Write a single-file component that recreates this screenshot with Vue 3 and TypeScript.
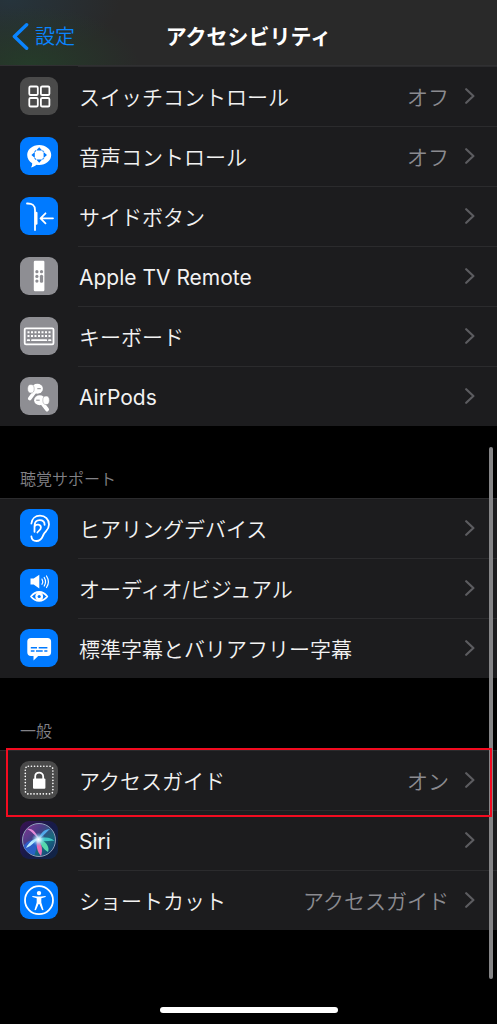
<script setup lang="ts">
type IconName =
  | 'switch' | 'voice' | 'side' | 'remote' | 'keyboard' | 'airpods'
  | 'ear' | 'av' | 'caption' | 'lock' | 'siri' | 'person'

interface Row {
  icon: IconName
  label: string
  tone: 'dark' | 'blue' | 'gray' | 'siri'
  value?: string
  marked?: boolean
  latin?: boolean
}

interface Section {
  id: string
  title?: string
  rows: Row[]
}

const sections: Section[] = [
  {
    id: 'input',
    rows: [
      { icon: 'switch', label: 'スイッチコントロール', tone: 'dark', value: 'オフ' },
      { icon: 'voice', label: '音声コントロール', tone: 'blue', value: 'オフ' },
      { icon: 'side', label: 'サイドボタン', tone: 'blue' },
      { icon: 'remote', label: 'Apple TV Remote', tone: 'gray', latin: true },
      { icon: 'keyboard', label: 'キーボード', tone: 'gray' },
      { icon: 'airpods', label: 'AirPods', tone: 'gray', latin: true },
    ],
  },
  {
    id: 'hearing',
    title: '聴覚サポート',
    rows: [
      { icon: 'ear', label: 'ヒアリングデバイス', tone: 'blue' },
      { icon: 'av', label: 'オーディオ/ビジュアル', tone: 'blue' },
      { icon: 'caption', label: '標準字幕とバリアフリー字幕', tone: 'blue' },
    ],
  },
  {
    id: 'general',
    title: '一般',
    rows: [
      { icon: 'lock', label: 'アクセスガイド', tone: 'dark', value: 'オン', marked: true },
      { icon: 'siri', label: 'Siri', tone: 'siri', latin: true },
      { icon: 'person', label: 'ショートカット', tone: 'blue', value: 'アクセスガイド' },
    ],
  },
]
</script>

<template>
  <div class="screen">
    <header class="nav">
      <a class="back" href="#settings">
        <svg class="back-arrow" viewBox="0 0 18 30" aria-hidden="true">
          <path d="M15.500 2.500 2.500 15l13 12.500" />
        </svg>
        <span>設定</span>
      </a>
      <h1>アクセシビリティ</h1>
    </header>

    <main>
      <section v-for="s in sections" :key="s.id">
        <h2 v-if="s.title">{{ s.title }}</h2>
        <ul class="group" :class="{ titled: s.title }">
          <li v-for="r in s.rows" :key="r.label" :class="{ marked: r.marked }">
            <button type="button" class="row">
              <span class="tile" :class="r.tone">
                <svg viewBox="0 0 38 38" aria-hidden="true">
                  <g v-if="r.icon === 'switch'" class="line">
                    <rect x="9.3" y="9.500" width="8.500" height="8.500" rx="1.3" />
                    <rect x="20.900" y="9.500" width="8.500" height="8.500" rx="1.3" />
                    <rect x="9.3" y="21" width="8.500" height="8.500" rx="1.3" />
                    <rect x="20.900" y="21" width="8.500" height="8.500" rx="1.3" />
                  </g>
                  <g v-else-if="r.icon === 'voice'">
                    <path class="fill" d="M19.2 8C12.500 8 7.200 12.400 7.200 18c0 3.400 1.900 6.400 5 8.200.1 1.500-.3 2.900-1.200 4.300 2.500-.5 4.300-1.500 5.700-2.700.8.1 1.600.2 2.500.2 6.700 0 12-4.400 12-10S25.900 8 19.200 8Z" />
                    <path class="cut" d="m19.200 10.200 3 3.400h-6zM19.200 25.800l3-3.400h-6zM11.400 18l3.400-3v6zM27 18l-3.400-3v6z" />
                    <path class="cut" d="m14 14.800 2-2-.2 1.900zM24.400 14.800l-2-2 .2 1.900zM14 21.200l2 2-.2-1.900zM24.400 21.200l-2 2 .2-1.900z" />
                  </g>
                  <g v-else-if="r.icon === 'side'" class="line">
                    <path d="M7 6.500c5.200-.2 8 1.700 8 6.500v20" />
                    <path d="M16.300 16v10.500" stroke-width="2.400" />
                    <path d="M33 21.300H20.700M25.500 16.300l-5 5 5 5" />
                  </g>
                  <g v-else-if="r.icon === 'remote'">
                    <rect class="fill" x="13.800" y="3.700" width="10.600" height="30.600" rx="1.200" />
                    <g class="cut">
                      <circle cx="16.900" cy="14.700" r="1.600" />
                      <circle cx="21.500" cy="14.700" r="1.600" />
                      <circle cx="16.900" cy="19.400" r="1.600" />
                      <circle cx="16.900" cy="24.100" r="1.600" />
                      <rect x="19.900" y="17.800" width="3.200" height="7.900" rx="1.500" />
                    </g>
                  </g>
                  <g v-else-if="r.icon === 'keyboard'">
                    <rect class="line" x="4.700" y="11.300" width="28.800" height="16" rx="1.300" />
                    <path class="keys" d="M7.500 15.300h23M7.500 19h23" />
                    <path class="line" d="M7.700 23.200h1.500M12 23.200h14.300M29 23.200h1.500" />
                  </g>
                  <g v-else-if="r.icon === 'airpods'">
                    <path class="stem" d="m14.500 15-4.700 6.500M22.500 26.500l4.600 6" />
                    <ellipse class="fill" cx="17.300" cy="11.700" rx="5.600" ry="5" />
                    <ellipse class="fill" cx="19.700" cy="23.200" rx="5.600" ry="5" />
                    <ellipse class="fill rim" cx="10.900" cy="11.800" rx="3.300" ry="4.300" />
                    <ellipse class="fill rim" cx="26.100" cy="23.300" rx="3.300" ry="4.300" />
                    <path class="slot" d="M17.300 11.700h3.500M16.200 23.200h3.500" />
                  </g>
                  <g v-else-if="r.icon === 'ear'" class="line">
                    <path d="M11.400 14.500C11.800 9.700 15.300 6.700 20 6.700c5.200 0 9 3.700 9 8.900 0 5.400-3.500 6.600-5.300 9.600-1.500 2.500-1.800 6.800-7.200 6.800-3 0-4.900-1.800-5.100-4.500" />
                    <path d="M14.500 22.800v-5.500c0-4 2-6.100 5.200-6.100 3 0 4.900 1.900 4.900 4.600M14.700 17.200c1.500-2.500 6.200-2.200 6.200 1.300 0 2.800-2.600 2.900-3.500 5" />
                  </g>
                  <g v-else-if="r.icon === 'av'">
                    <path class="fill" d="M10.500 9.600h3.200l5.600-3.900v13.800l-5.600-3.900h-3.200z" />
                    <path class="line thin" d="M22 10.100c.9 1.500.9 3.700 0 5.200M24.200 8.500c1.600 2.600 1.600 5.900 0 8.500M26.500 7c2.300 3.500 2.300 8 0 11.500" />
                    <path class="line" d="M11 27.500c4.600-6 11.700-6 16.300 0-4.600 5.800-11.700 5.800-16.300 0Z" />
                    <circle class="fill" cx="19.200" cy="27.500" r="3.900" />
                    <circle class="cut" cx="19.200" cy="27.500" r="1.600" />
                  </g>
                  <g v-else-if="r.icon === 'caption'">
                    <path class="fill" d="M11 8.900h16.400q3.700 0 3.700 3.600v10.800q0 3.600-3.700 3.600h-9.200l-4.700 4.700v-4.700H11q-3.700 0-3.700-3.600V12.500q0-3.600 3.700-3.600Z" />
                    <path class="words" d="M10.800 18.700H17M18.700 18.700h8.700M10.800 22h3.700M16 22h6.700M24.300 22h3.100" />
                  </g>
                  <g v-else-if="r.icon === 'lock'">
                    <rect class="dots" x="5.300" y="5.300" width="27.600" height="27.600" rx="3" />
                    <rect class="fill" x="13" y="17.600" width="12.400" height="10.200" rx="1" />
                    <path class="line" d="M15.200 18v-2.500c0-5.200 8-5.200 8 0V18" />
                  </g>
                  <g v-else-if="r.icon === 'siri'">
                    <defs>
                      <linearGradient id="orb" x1="0" y1="0" x2="1" y2="1">
                        <stop offset="0" stop-color="#8d3596" />
                        <stop offset=".35" stop-color="#4a3c86" />
                        <stop offset=".65" stop-color="#186a7d" />
                        <stop offset="1" stop-color="#152d75" />
                      </linearGradient>
                      <radialGradient id="core">
                        <stop offset="0" stop-color="#fff" />
                        <stop offset=".35" stop-color="#cdeeff" stop-opacity=".85" />
                        <stop offset="1" stop-color="#58b9eb" stop-opacity="0" />
                      </radialGradient>
                    </defs>
                    <circle cx="19" cy="19" r="16.500" fill="url(#orb)" stroke="#8ea0b9" stroke-width="1" />
                    <path d="M19 19C12 17 6 21 3.500 25c2.500 6 6 8 11 9Z" fill="#2a62d8" opacity=".8" />
                    <path d="M19 18C15 9 11 7 7 8c5 2 8 7 12 10Z" fill="#e58bd8" />
                    <path d="M19 18c1-6 6-10 11-10-4 3-6 7-11 10Z" fill="#51a9e9" />
                    <path d="M19 18c7-3 12-1 15.500 2-6-1-11 2-15.500-2Z" fill="#3dc7c3" />
                    <path d="M18 17c8 3 12 9 10 14-5-3-8-8-10-14Z" fill="#56d8ab" />
                    <path d="M17 18c5 4 6 11 4 17-4-4-5-11-4-17Z" fill="#e96cb6" />
                    <path d="M20 17c-4 2-8 8-14 10 3-6 8-10 14-10Z" fill="#b9eaff" />
                    <circle cx="18.500" cy="18.500" r="7" fill="url(#core)" />
                  </g>
                  <g v-else>
                    <circle class="line" cx="19" cy="19.200" r="14" />
                    <circle class="fill" cx="19" cy="12.100" r="2.200" />
                    <path class="fill" d="M12.700 14.900 17 15.600h4l4.300-.7q1 .2.300 1.200l-4.300 1.100v4.300l2.200 7.200q-.6 1.100-1.600.1L19.400 23h-.8l-2.500 5.800q-1 1-1.600-.1l2.200-7.200v-4.300l-4.300-1.100q-.7-1 .3-1.200Z" />
                  </g>
                </svg>
              </span>
              <span class="text">
                <span class="label" :class="{ latin: r.latin }">{{ r.label }}</span>
                <span v-if="r.value" class="value">{{ r.value }}</span>
                <svg class="chevron" viewBox="0 0 10 16" aria-hidden="true">
                  <path d="m1.200 1.200 7.200 6.800-7.200 6.800" />
                </svg>
              </span>
            </button>
          </li>
        </ul>
      </section>
    </main>

    <div class="scrollbar"></div>
    <div class="home"></div>
  </div>
</template>

<style>
body {
  margin: 0;
  background: #000;
}
</style>

<style scoped>
.screen {
  position: relative;
  min-height: 100vh;
  overflow: hidden;
  background: #000;
  color: #f2f2f2;
  font-family: Inter, "Noto Sans CJK JP", sans-serif;
  font-size: 21px;
  line-height: 30px;
}

.nav {
  display: grid;
  grid-template-columns: 1fr auto 1fr;
  align-items: center;
  box-sizing: border-box;
  height: 66px;
  padding: 8px 12px 0;
  border-bottom: 1px solid #303032;
  background:
    radial-gradient(ellipse 110px 60px at 30px 66px, #253c2a, transparent),
    radial-gradient(ellipse 110px 60px at 10px 0, #26343c, transparent),
    #292929;
}

.back {
  display: flex;
  align-items: center;
  gap: 6px;
  color: #0a84ff;
  font-size: 20px;
  font-weight: 350;
  text-decoration: none;
}

.back-arrow {
  width: 17px;
  height: 29px;
  fill: none;
  stroke: currentColor;
  stroke-width: 3.600;
  stroke-linecap: round;
  stroke-linejoin: round;
}

h1 {
  margin: 0;
  color: #fff;
  font-size: 21px;
  font-weight: 700;
}

h2 {
  box-sizing: border-box;
  height: 72px;
  margin: 0;
  padding: 38px 20px 0;
  color: #828287;
  font-size: 16px;
  font-weight: 350;
}

.group {
  margin: 0;
  padding: 0;
  list-style: none;
  background: #1c1c1e;
}

.titled {
  background: linear-gradient(#2b2b2d 1px, #1c1c1e 1px);
}

li {
  position: relative;
}

.row {
  display: flex;
  align-items: center;
  gap: 20px;
  width: 100%;
  height: 60px;
  padding: 0 0 0 20px;
  border: 0;
  background: none;
  color: inherit;
  font: inherit;
  font-weight: 350;
  text-align: left;
}

.text {
  display: flex;
  flex: 1;
  align-items: center;
  box-sizing: border-box;
  height: 60px;
  padding: 2px 22px 0 1px;
  border-top: 1px solid #2b2b2d;
}

.label {
  flex: 1;
  white-space: nowrap;
}

.latin {
  font-weight: 400;
}

.value {
  color: #8b8b90;
}

.chevron {
  width: 10px;
  height: 16px;
  margin: 0 0 3px 16px;
  fill: none;
  stroke: #5c5c60;
  stroke-width: 2.2;
  stroke-linecap: round;
  stroke-linejoin: round;
}

.tile {
  display: block;
  width: 38px;
  height: 38px;
  overflow: hidden;
  border-radius: 9px;
  background: var(--tile);
}

.tile svg {
  display: block;
  width: 38px;
  height: 38px;
}

.dark { --tile: #4a4a4a; }
.blue { --tile: #007aff; }
.gray { --tile: #8e8e93; }
.siri { --tile: linear-gradient(130deg, #3a1353, #171a48 50%, #102646); }

.fill { fill: #fff; }
.cut { fill: var(--tile); }

.line {
  fill: none;
  stroke: #fff;
  stroke-width: 1.8;
  stroke-linecap: round;
  stroke-linejoin: round;
}

.thin { stroke-width: 1.2; }

.keys {
  stroke: #fff;
  stroke-width: 2;
  stroke-dasharray: 2 1.5;
}

.stem {
  stroke: #fff;
  stroke-width: 3.8;
  stroke-linecap: round;
}

.rim {
  stroke: var(--tile);
  stroke-width: .5;
}

.slot {
  fill: none;
  stroke: var(--tile);
  stroke-width: 1;
}

.words {
  stroke: var(--tile);
  stroke-width: 1.4;
}

.dots {
  fill: none;
  stroke: #fff;
  stroke-width: 1.6;
  stroke-linecap: round;
  stroke-dasharray: .1 3;
}

.marked::after {
  position: absolute;
  inset: -2px 5px -7px 6px;
  z-index: 2;
  border: 2px solid #f30b20;
  content: "";
  pointer-events: none;
}

.scrollbar {
  position: absolute;
  top: 447px;
  right: 4px;
  bottom: 45px;
  width: 4px;
  border-radius: 2px;
  background: #858587;
}

.home {
  position: absolute;
  bottom: 11px;
  left: 50%;
  width: 178px;
  height: 6px;
  border-radius: 3px;
  background: #fff;
  transform: translateX(-50%);
}
</style>
